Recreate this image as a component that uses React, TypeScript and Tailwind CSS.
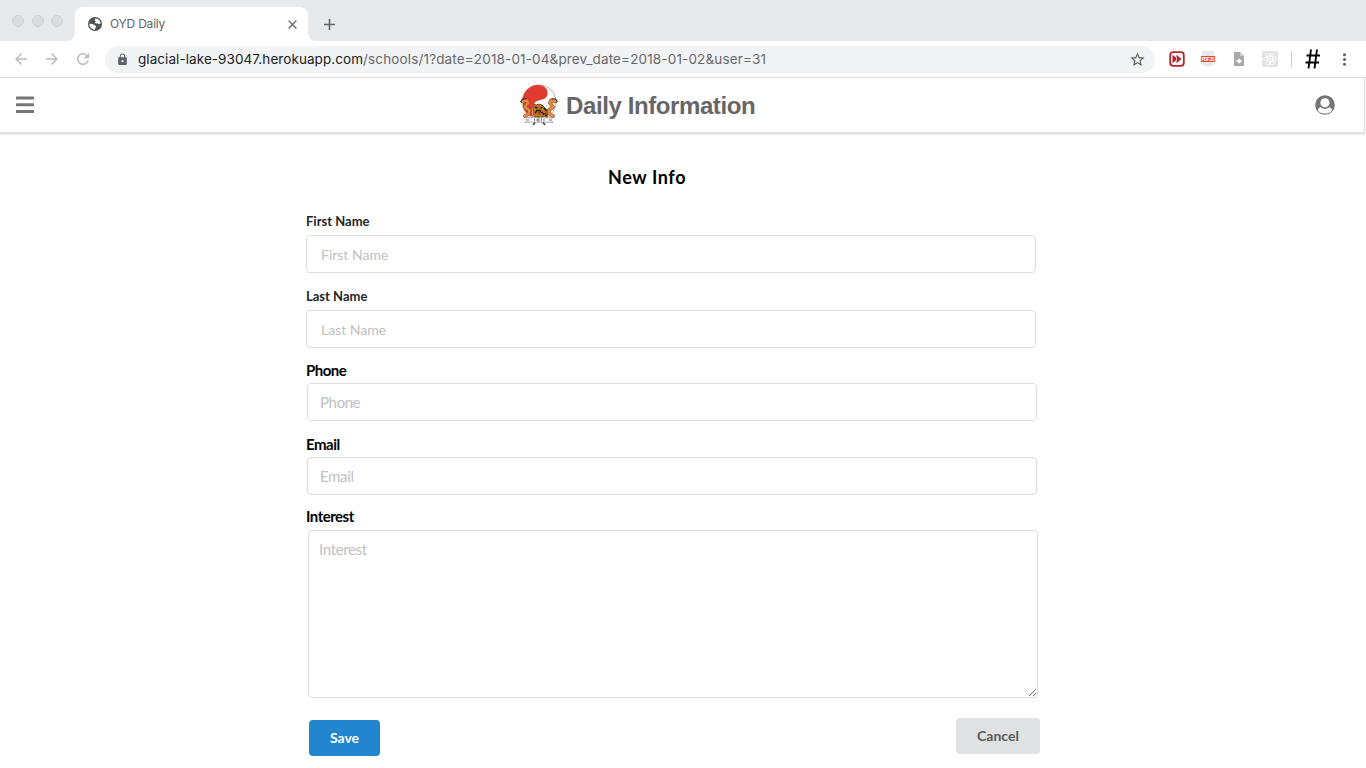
import React from "react";
import { MdArrowBack, MdArrowForward, MdRefresh, MdLock, MdStarBorder, MdClose, MdAdd, MdMoreVert } from "react-icons/md";

function Globe() {
  return (
    <svg className="h-4 w-4" viewBox="0 0 16 16">
      <circle cx="8" cy="8" r="7" fill="#505357" />
      <path d="M8.300 2.600L11 2.900 13 5.200 13.600 7.500 11.800 8.300 10.500 7.300 8.600 7.600 7.600 6.600 8.800 5.400 7.700 4.300z" fill="#fff" />
      <path d="M2.300 7.800L5.500 8 7.800 9.200 9.300 10.800 8.300 12 7.900 13.700A5.700 5.700 0 0 1 2.300 7.800z" fill="#fff" />
    </svg>
  );
}

function TabStrip() {
  return (
    <div className="flex h-[41px] bg-[#e7eaed] pt-[7px]">
      <div className="flex w-[75px] gap-[7.500px] pl-[12px] pt-[8px]">
        {[0, 1, 2].map((i) => (
          <span key={i} className="h-3 w-3 shrink-0 rounded-full border border-[#d0d0d0] bg-[#dcdcdc]" />
        ))}
      </div>
      <div className="relative flex h-[34px] w-[233px] items-center rounded-t-lg bg-white pl-[12px] pr-[8px]">
        <svg className="absolute bottom-0 -left-2 h-2 w-2" viewBox="0 0 8 8" fill="#fff">
          <path d="M8 0v8H0a8 8 0 0 0 8-8z" />
        </svg>
        <svg className="absolute -right-2 bottom-0 h-2 w-2" viewBox="0 0 8 8" fill="#fff">
          <path d="M0 0v8h8a8 8 0 0 1-8-8z" />
        </svg>
        <Globe />
        <span className="ml-[7px] font-['Inter',sans-serif] text-[12px] leading-4 tracking-[-0.200px] text-[#606367]">OYD Daily</span>
        <MdClose className="ml-auto h-[15px] w-[15px] text-[#5f6368]" />
      </div>
      <MdAdd className="ml-[12px] mt-[8px] h-[19px] w-[19px] text-[#5f6368]" />
    </div>
  );
}

function Extensions() {
  return (
    <div className="flex h-9 items-center">
      <svg className="ml-[14px] h-4 w-4" viewBox="0 0 16 16">
        <rect x="1.200" y="1.200" width="13.600" height="13.600" rx="3" fill="#fff" stroke="#b5252b" strokeWidth="1.800" />
        <path d="M3.500 3.800l4 3.200V3.800L12.500 8l-5 4.200V9l-4 3.200z" fill="#b5252b" />
        <path d="M7.500 6.500v3" stroke="#fff" strokeWidth="0.700" />
      </svg>
      <svg className="ml-[15px] h-4 w-4" viewBox="0 0 16 16">
        <path d="M1.500 0h13l-1 14L8 16l-5.500-2z" fill="#e9e9e9" />
        <rect x="1" y="5" width="14" height="6" fill="#f0432e" />
        <text x="1.500" y="10" fontSize="5" fontWeight="700" fontFamily="Liberation Sans" fill="#fff" textLength="13">PDF JS</text>
      </svg>
      <svg className="ml-[15px] h-4 w-4" viewBox="0 0 16 16">
        <path d="M3 1h6l4 4v10H3z" fill="#a9a9a9" />
        <path d="M9 1v4h4z" fill="#d0d0d0" />
        <path d="M5.500 9h2V7l3.500 3-3.500 3v-2h-2z" fill="#fff" />
      </svg>
      <svg className="ml-[15px] h-4 w-4" viewBox="0 0 16 16">
        <rect width="16" height="16" rx="1" fill="#e3e3e3" />
        <g fill="none" stroke="#fafafa" strokeWidth="0.900">
          <ellipse cx="8" cy="8" rx="6.500" ry="2.500" />
          <ellipse cx="8" cy="8" rx="6.500" ry="2.500" transform="rotate(60 8 8)" />
          <ellipse cx="8" cy="8" rx="6.500" ry="2.500" transform="rotate(120 8 8)" />
        </g>
        <circle cx="8" cy="8" r="1.200" fill="#fafafa" />
      </svg>
      <span className="ml-[13px] h-4 w-px bg-[#c9cbce]" />
      <svg className="ml-[13px] h-5 w-4" viewBox="0 0 16 20" stroke="#000" strokeWidth="1.900" fill="none">
        <path d="M6 0.500L3.500 19.500M12 0.500L9.500 19.500M1.500 6.500H15M0.500 13.500H14" />
      </svg>
      <MdMoreVert className="ml-[14px] h-[19px] w-[19px] text-[#5f6368]" />
    </div>
  );
}

function Toolbar() {
  return (
    <div className="flex h-[37px] items-center border-b border-[#d9dbdd] bg-white">
      <MdArrowBack className="ml-[12px] h-[18px] w-[18px] text-[#b9bbbd]" />
      <MdArrowForward className="ml-[13px] h-[18px] w-[18px] text-[#b9bbbd]" />
      <MdRefresh className="ml-[13px] h-[18px] w-[18px] text-[#b9bbbd]" />
      <div className="ml-[13px] flex h-[27px] w-[1050px] items-center rounded-full bg-[#f1f3f4] pl-[11px] pr-[9px]">
        <MdLock className="h-[13px] w-[13px] text-[#5f6368]" />
        <span className="ml-[9px] whitespace-nowrap font-['Inter',sans-serif] text-[13.500px] leading-5 text-[#202124]">
          <span className="tracking-[0.070px]">glacial-lake-93047.herokuapp.com</span>
          <span className="tracking-[0.145px] text-[#66696d]">/schools/1?date=2018-01-04&amp;prev_date=2018-01-02&amp;user=31</span>
        </span>
        <MdStarBorder className="ml-auto h-[17px] w-[17px] text-[#5f6368]" />
      </div>
      <Extensions />
    </div>
  );
}

function Emblem() {
  return (
    <svg className="h-[42px] w-[38px]" viewBox="0 0 38 42">
      <circle cx="19" cy="18" r="17" fill="#fff" stroke="#8b8f92" strokeWidth="0.700" />
      <path d="M3 20C1 9 9 1 18 1C26 1 29 7 27 12C25 17 17 15 14.500 19C12 23 12 28 13 33C7 31 3 26 3 20z" fill="#e03a31" />
      <g fill="none" strokeLinecap="round" strokeLinejoin="round">
        <path d="M2.500 17.500L7 16.500 8 19 5 23 9.500 26.500 8.500 30 5 32" stroke="#8a4a1c" strokeWidth="3.600" />
        <path d="M2.500 17.500L7 16.500 8 19 5 23 9.500 26.500 8.500 30 5 32" stroke="#e6883c" strokeWidth="2.600" />
        <path d="M35.500 17.500L31 16.500 30 19 33 23 28.500 26.500 29.500 30 33 32" stroke="#8a4a1c" strokeWidth="3.600" />
        <path d="M35.500 17.500L31 16.500 30 19 33 23 28.500 26.500 29.500 30 33 32" stroke="#e6883c" strokeWidth="2.600" />
      </g>
      <path d="M0.500 18l2-3 4-0.500M37.500 18l-2-3-4-0.500" stroke="#4a3626" strokeWidth="1.200" fill="none" />
      <path d="M14 20l2 1 3-1 3 1 2 2 3 3 0.500 7H14l-1-7z" fill="#b9781f" stroke="#4d2e0c" strokeWidth="0.700" />
      <path d="M15 23l2.500 1.200M20.500 24.200l2-1.200M15 29l2-2.500h3l1 2.500M24 24l2.500 3M22 28l2 3M25 29l1.500 3" stroke="#241a10" strokeWidth="1.300" fill="none" />
      <path d="M17 28h3.500L19 31z" fill="#d62922" />
      <path d="M5 33l6 1 2-1 6 1 6-1 2 1 6-1-2 3 2 2.500-6-0.500-2 1-6-1-6 1-2-1-6 0.500 2-2.500z" fill="#f7f7f7" stroke="#888" strokeWidth="0.700" />
      <path d="M15 38.500l-2 2.500M23 38.500l2 2.500" stroke="#4b4846" strokeWidth="1.500" />
      <path d="M14.500 34.500v3M17 35h2v2h-2zM21.500 34.500v3M24 34.500v3M8 35v2M30 35v2" stroke="#666" strokeWidth="0.800" fill="none" />
    </svg>
  );
}

function Header() {
  return (
    <header className="mr-px flex h-[56px] items-center border-b-2 border-r border-[#dfdfdf] bg-white pl-[16px] pr-[29px] shadow-[0_1px_2px_rgba(0,0,0,0.08)]">
      <svg className="h-[18px] w-[18px]" viewBox="0 0 18 18" fill="#757575">
        <rect y="0.500" width="18" height="3" rx="0.600" />
        <rect y="7.200" width="18" height="3" rx="0.600" />
        <rect y="14" width="18" height="3" rx="0.600" />
      </svg>
      <div className="ml-[486px] flex items-center gap-[8px]">
        <Emblem />
        <h1 className="whitespace-nowrap pt-[2px] font-['Liberation_Sans',sans-serif] text-[24px] font-bold leading-7 tracking-[-0.400px] text-[#666]">Daily Information</h1>
      </div>
      <svg className="ml-auto h-5 w-5" viewBox="0 0 20 20">
        <circle cx="10" cy="10" r="9.800" fill="#757575" />
        <ellipse cx="10" cy="14.800" rx="7" ry="3.700" fill="#fff" />
        <circle cx="10" cy="8" r="5.900" fill="#757575" />
        <circle cx="10" cy="7.800" r="4.600" fill="#fff" />
      </svg>
    </header>
  );
}

const inputBase = "block h-[38px] w-[730px] rounded border border-[#dcdddd] bg-white pr-[13px] outline-none placeholder:text-[#c0c1c1]";

function InfoForm() {
  return (
    <form className="ml-[306px] flex w-[734px] flex-col pt-[30px] font-['Lato',sans-serif]">
      <h2 className="ml-[302px] h-[26px] whitespace-nowrap text-[18px] font-bold leading-[26px] tracking-[0.600px] text-black">New Info</h2>
      <label className="mt-[22px] h-[23px] text-[13px] font-bold leading-[18px] text-[#252627]">First Name</label>
      <input className={inputBase + " pl-[14px] text-[14px]"} placeholder="First Name" />
      <label className="mt-[13px] h-[24px] text-[13px] font-bold leading-[20px] text-[#252627]">Last Name</label>
      <input className={inputBase + " pl-[14px] text-[14px]"} placeholder="Last Name" />
      <label className="mt-[11px] h-[24px] text-[15px] font-bold leading-[22px] tracking-[-0.500px] text-black">Phone</label>
      <input className={inputBase + " ml-px pb-px pl-[12px] text-[15px] tracking-[-0.350px]"} placeholder="Phone" />
      <label className="mt-[12px] h-[24px] text-[15px] font-bold leading-[22px] tracking-[-0.500px] text-black">Email</label>
      <input className={inputBase + " ml-px pb-px pl-[12px] text-[15px] tracking-[-0.350px]"} placeholder="Email" />
      <label className="mt-[10px] h-[25px] text-[15px] font-bold leading-[22px] tracking-[-0.500px] text-black">Interest</label>
      <textarea className="ml-[2px] block h-[168px] w-[730px] resize rounded border border-[#dcdddd] bg-white px-[10px] pt-[8px] text-[15px] leading-5 tracking-[-0.350px] outline-none placeholder:text-[#c0c1c1]" placeholder="Interest" />
      <div className="ml-[3px] mt-[20px] flex items-start justify-between">
        <button type="button" className="mt-[2px] h-[36px] w-[71px] rounded bg-[#2185d0] text-[14px] font-bold leading-[36px] text-white">Save</button>
        <button type="button" className="h-[36px] w-[84px] rounded bg-[#e0e1e2] text-[14px] font-bold leading-[36px] text-[#5a5b5c]">Cancel</button>
      </div>
    </form>
  );
}

export default function App() {
  return (
    <div className="h-[768px] w-[1366px] overflow-hidden bg-white">
      <TabStrip />
      <Toolbar />
      <Header />
      <InfoForm />
    </div>
  );
}
